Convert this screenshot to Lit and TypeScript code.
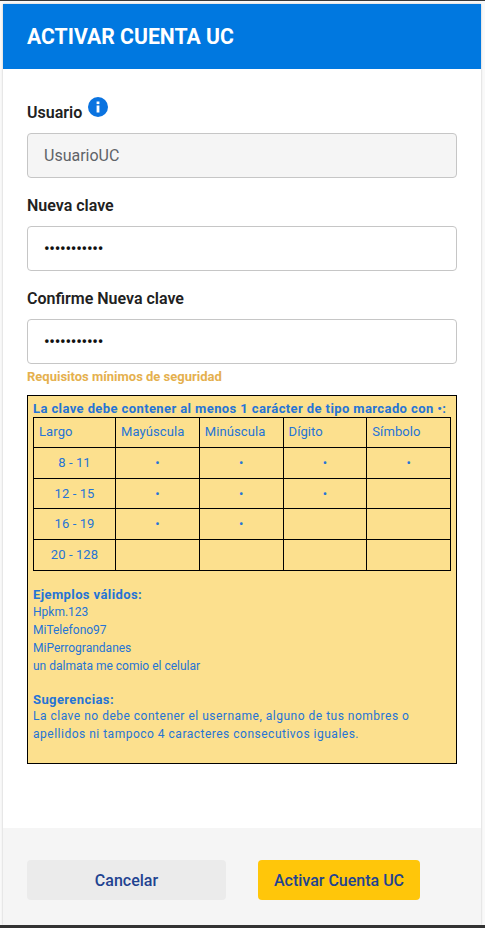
import { LitElement, html, css } from "lit";
import { customElement } from "lit/decorators.js";

const ROWS: [string, number][] = [["8 - 11", 4], ["12 - 15", 3], ["16 - 19", 2], ["20 - 128", 0]];
const HEADS = ["Largo", "Mayúscula", "Minúscula", "Dígito", "Símbolo"];

@customElement("app-root")
export class AppRoot extends LitElement {
  static styles = css`
    :host { display: block; width: 485px; height: 928px; background: #f8f8f8; font-family: Roboto, sans-serif; overflow: hidden; }
    .page { height: 928px; display: flex; flex-direction: column; box-sizing: border-box; border-top: 1px solid #3a3a3a; border-bottom: 3px solid #333; background: #f9f9f9; overflow: hidden; }
    .modal { flex: 1; margin: 3px 4px 0 3px; background: #fff; display: flex; flex-direction: column; box-shadow: 0 0 2px rgba(0, 0, 0, 0.22); }
    header { height: 65px; background: #0078e0; color: #fff; font-size: 21.2px; font-weight: 700; display: flex; align-items: center; padding-left: 24px; flex: none; }
    .body { flex: 1; padding: 34px 24px 0; }
    .label { font-size: 16px; font-weight: 600; color: #212121; line-height: 19px; display: flex; }
    .label svg { margin: -6px 0 0 6px; }
    .input { box-sizing: border-box; width: 430px; height: 45px; border: 1px solid #c6c6c6; border-radius: 4px; margin-top: 11px; padding-left: 16px; display: flex; align-items: center; font-size: 16px; background: #fff; color: #111; }
    .input.off { background: #f5f5f5; color: #5f6368; }
    .dots { letter-spacing: -0.22px; font-size: 16px; font-weight: 500; }
    .gap { height: 18px; }
    .req { color: #e5b04e; font-size: 13px; font-weight: 700; margin-top: 5px; line-height: 15px; }
    .box { box-sizing: border-box; width: 430px; height: 369px; margin-top: 11px; border: 1px solid #000; background: #fce08e; padding: 5px 5px 0; color: #2574d6; font-size: 12px; line-height: 18px; letter-spacing: 0.5px; }
    .box b { font-weight: 700; display: block; line-height: 16px; font-size: 13px; letter-spacing: 0.4px; }
    .box .lead { line-height: 15.6px; }
    .box .sub { margin-bottom: -1px; }
    table { border-collapse: collapse; table-layout: fixed; width: 418px; font-size: 13px; letter-spacing: 0.1px; margin-bottom: 16px; }
    td { border: 1px solid #000; height: 30.6px; padding: 0; text-align: center; box-sizing: border-box; }
    td.first { width: 82px; }
    tr.head td { text-align: left; padding-left: 5px; }
    .spacer { height: 17px; }
    .plain { letter-spacing: 0; }
    .foot { height: 97px; flex: none; background: #f5f5f5; display: flex; gap: 32px; padding: 32px 24px 0; box-sizing: border-box; }
    .btn { height: 40px; border-radius: 4px; display: flex; align-items: center; justify-content: center; font-size: 16px; font-weight: 500; color: #1f4391; box-sizing: border-box; }
    .cancel { width: 199px; background: #ebebeb; }
    .ok { width: 162px; background: #ffc60a; }
  `;

  render() {
    return html`<div class="page"><div class="modal">
      <header>ACTIVAR CUENTA UC</header>
      <div class="body">
        <div class="label">Usuario
          <svg width="20" height="20" viewBox="0 0 20 20"><circle cx="10" cy="10" r="10" fill="#0a73e0"/><rect x="8.6" y="8.5" width="2.8" height="7" fill="#fff"/><rect x="8.6" y="4.5" width="2.8" height="2.6" fill="#fff"/></svg>
        </div>
        <div class="input off">UsuarioUC</div>
        <div class="gap"></div>
        <div class="label">Nueva clave</div>
        <div class="input"><span class="dots">•••••••••••</span></div>
        <div class="gap"></div>
        <div class="label">Confirme Nueva clave</div>
        <div class="input"><span class="dots">•••••••••••</span></div>
        <div class="req">Requisitos mínimos de seguridad</div>
        <div class="box">
          <b class="lead">La clave debe contener al menos 1 carácter de tipo marcado con •:</b>
          <table>
            <tr class="head">${HEADS.map((h, i) => html`<td class=${i === 0 ? "first" : ""}>${h}</td>`)}</tr>
            ${ROWS.map(([r, n]) => html`<tr><td>${r}</td>${[0, 1, 2, 3].map((i) => html`<td>${i < n ? "•" : ""}</td>`)}</tr>`)}
          </table>
          <b>Ejemplos válidos:</b>
          <div class="plain">Hpkm.123<br />MiTelefono97<br />MiPerrograndanes<br />un dalmata me comio el celular</div>
          <div class="spacer"></div>
          <b class="sub">Sugerencias:</b>
          <div>La clave no debe contener el username, alguno de tus nombres o apellidos ni tampoco 4 caracteres consecutivos iguales.</div>
        </div>
      </div>
      <div class="foot">
        <div class="btn cancel">Cancelar</div>
        <div class="btn ok">Activar Cuenta UC</div>
      </div>
    </div></div>`;
  }
}
